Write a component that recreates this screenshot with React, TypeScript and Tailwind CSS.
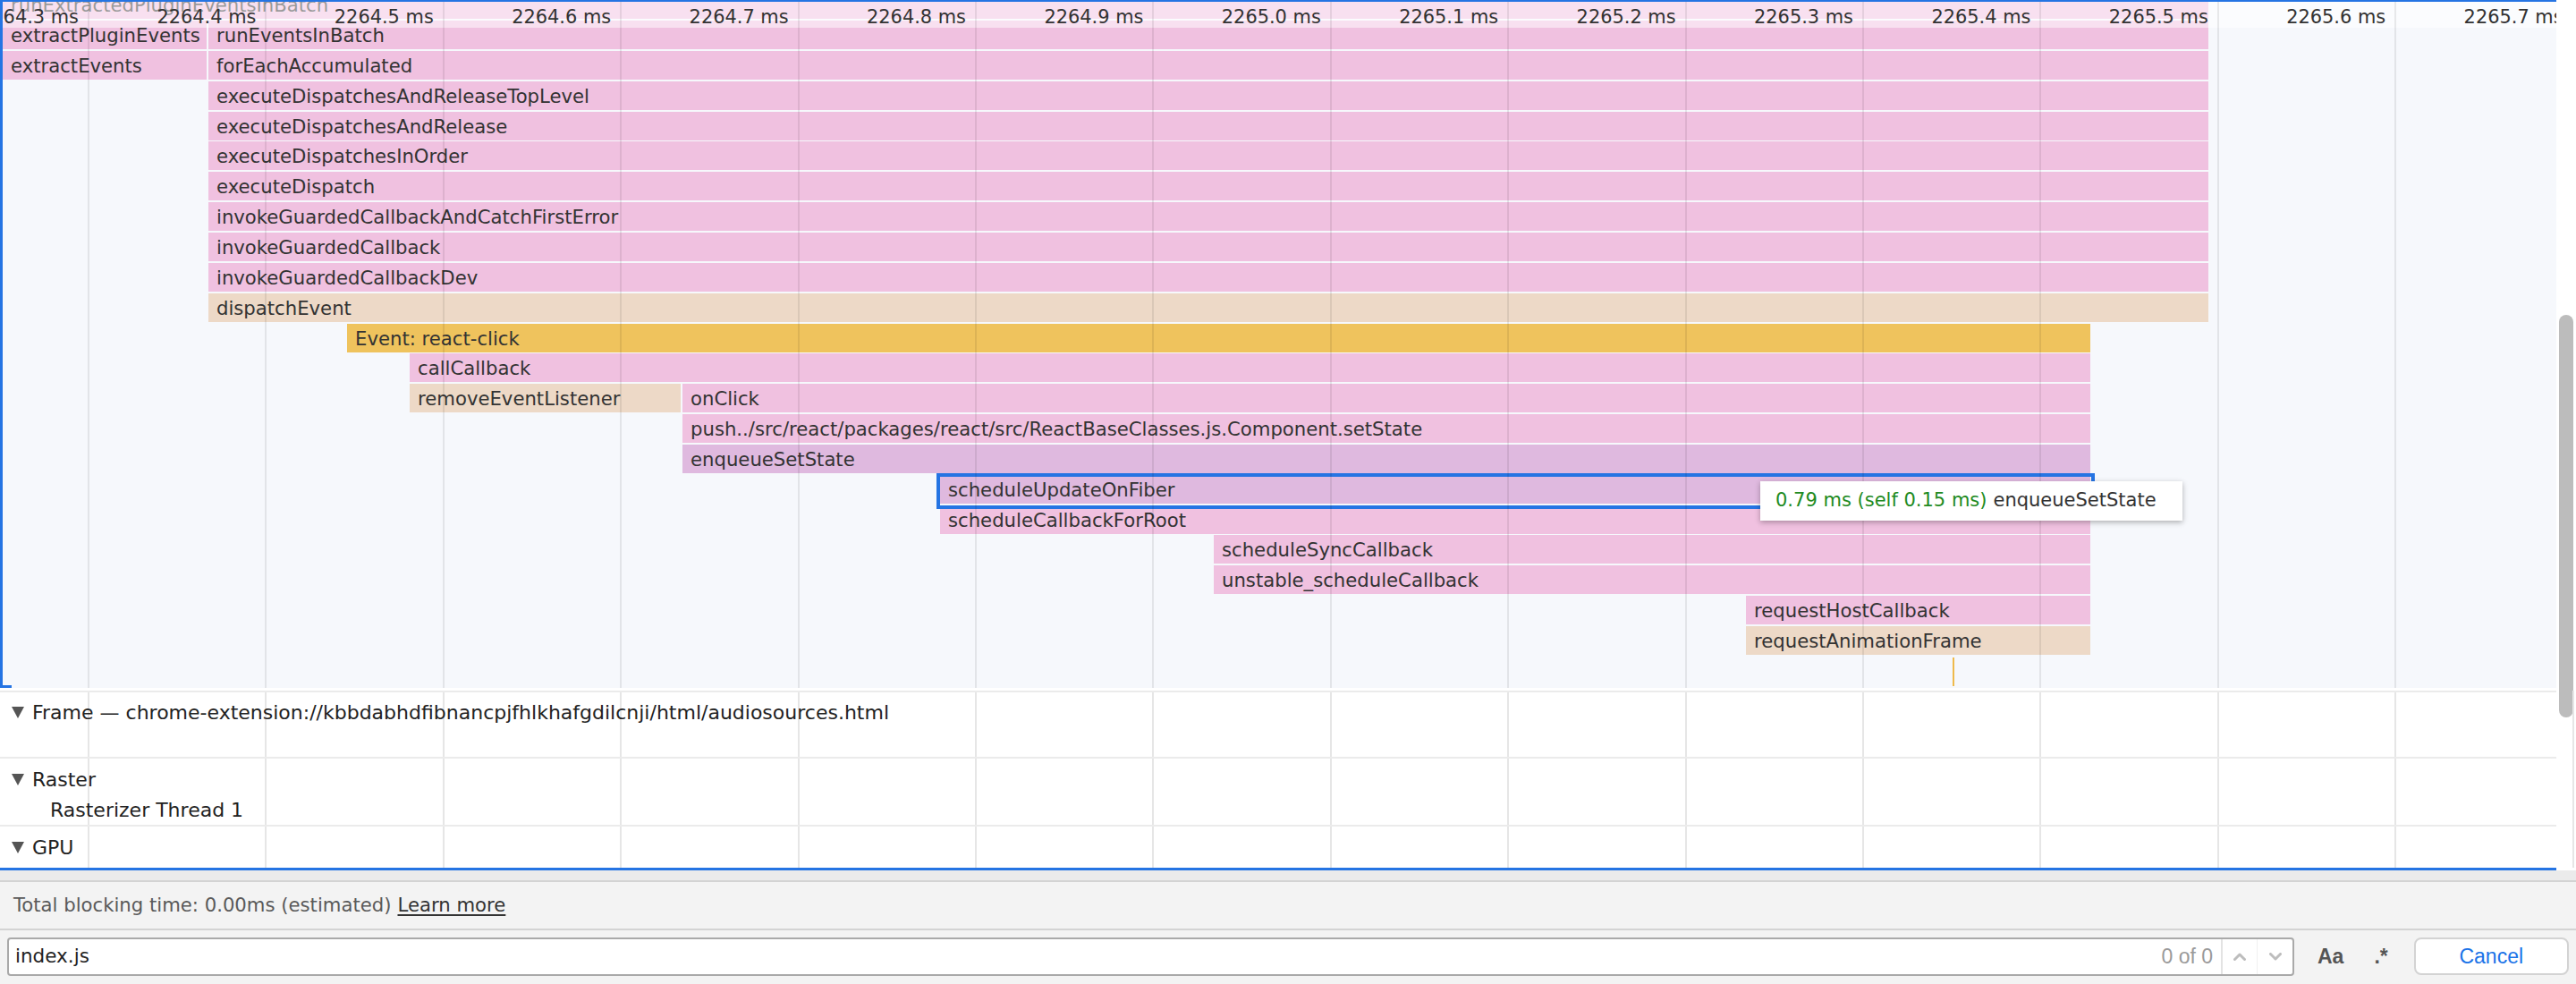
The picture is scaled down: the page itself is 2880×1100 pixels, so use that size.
import React from "react";

const LINE0 = 99;
const STEP = 198.4;
const ROW0 = 23;
const PITCH = 33.85;
const BAR_H = 32;
const BL = 3; // left border
const BT = 2; // top border

const PINK = "bg-[#f0c1e0]";
const TAN = "bg-[#edd9c7]";
const YEL = "bg-[#efc35d]";
const PUR = "bg-[#dfb9df]";

type Bar = { row: number; x1: number; x2: number; label: string; c: string };

const bars: Bar[] = [
  { row: -1, x1: 3, x2: 2469, label: "runExtractedPluginEventsInBatch", c: PINK },
  { row: 0, x1: 3, x2: 231, label: "extractPluginEvents", c: PINK },
  { row: 0, x1: 233, x2: 2469, label: "runEventsInBatch", c: PINK },
  { row: 1, x1: 3, x2: 231, label: "extractEvents", c: PINK },
  { row: 1, x1: 233, x2: 2469, label: "forEachAccumulated", c: PINK },
  { row: 2, x1: 233, x2: 2469, label: "executeDispatchesAndReleaseTopLevel", c: PINK },
  { row: 3, x1: 233, x2: 2469, label: "executeDispatchesAndRelease", c: PINK },
  { row: 4, x1: 233, x2: 2469, label: "executeDispatchesInOrder", c: PINK },
  { row: 5, x1: 233, x2: 2469, label: "executeDispatch", c: PINK },
  { row: 6, x1: 233, x2: 2469, label: "invokeGuardedCallbackAndCatchFirstError", c: PINK },
  { row: 7, x1: 233, x2: 2469, label: "invokeGuardedCallback", c: PINK },
  { row: 8, x1: 233, x2: 2469, label: "invokeGuardedCallbackDev", c: PINK },
  { row: 9, x1: 233, x2: 2469, label: "dispatchEvent", c: TAN },
  { row: 10, x1: 388, x2: 2337, label: "Event: react-click", c: YEL },
  { row: 11, x1: 458, x2: 2337, label: "callCallback", c: PINK },
  { row: 12, x1: 458, x2: 761, label: "removeEventListener", c: TAN },
  { row: 12, x1: 763, x2: 2337, label: "onClick", c: PINK },
  { row: 13, x1: 763, x2: 2337, label: "push../src/react/packages/react/src/ReactBaseClasses.js.Component.setState", c: PINK },
  { row: 14, x1: 763, x2: 2337, label: "enqueueSetState", c: PUR },
  { row: 15, x1: 1051, x2: 2337, label: "scheduleUpdateOnFiber", c: PUR },
  { row: 16, x1: 1051, x2: 2337, label: "scheduleCallbackForRoot", c: PINK },
  { row: 17, x1: 1357, x2: 2337, label: "scheduleSyncCallback", c: PINK },
  { row: 18, x1: 1357, x2: 2337, label: "unstable_scheduleCallback", c: PINK },
  { row: 19, x1: 1952, x2: 2337, label: "requestHostCallback", c: PINK },
  { row: 20, x1: 1952, x2: 2337, label: "requestAnimationFrame", c: TAN },
];

const lines = Array.from({ length: 15 }, (_, k) => LINE0 + STEP * k);
const labels = lines.map((x, k) => ({ x, text: `${(2264.3 + 0.1 * k).toFixed(1)} ms` }));

const FONT = "font-['DejaVu_Sans',sans-serif]";

function FlameChart() {
  return (
    <div className="relative h-[769px] overflow-hidden border-l-[3px] border-t-[2px] border-[#2574e3] bg-[#f6f8fc]">
      {bars.map((b, i) => (
        <div
          key={i}
          className={`absolute overflow-hidden whitespace-nowrap pl-[9px] text-[21.2px] leading-[34px] text-[#333333] ${b.c}`}
          style={{ left: b.x1 - BL, width: b.x2 - b.x1, top: ROW0 + PITCH * b.row - BT, height: BAR_H }}
        >
          {b.label}
        </div>
      ))}
      {/* selection outline */}
      <div
        className="absolute border-[4px] border-[#2574e3]"
        style={{ left: 1047 - BL, top: 529 - BT, width: 2342 - 1047, height: 40 }}
      />
      {/* small tick */}
      <div className="absolute w-[2px] bg-[#efba4c]" style={{ left: 2183 - BL, top: 735 - BT, height: 32 }} />
      {/* ruler overlay */}
      <div className="absolute left-0 right-0 top-0 h-[29px] bg-white/50" />
      {lines.map((x, k) => (
        <div key={k} className="absolute top-0 bottom-0 w-[2px] bg-black/[0.08]" style={{ left: x - BL - 1 }} />
      ))}
      {labels.map((l, k) => (
        <div
          key={k}
          className="absolute w-[200px] whitespace-nowrap text-right text-[20.9px] leading-[32px] text-[#333333]"
          style={{ left: l.x - 11 - 200 - BL, top: 1 }}
        >
          {l.text}
        </div>
      ))}
      {/* tooltip */}
      <div
        className="absolute flex h-[44px] items-center whitespace-nowrap bg-white pl-[17px] text-[21px] shadow-[0_2px_6px_rgba(0,0,0,0.3)]"
        style={{ left: 1968 - BL, top: 538 - BT, width: 472 }}
      >
        <span className="text-[#228b22]">0.79 ms (self 0.15 ms)</span>
        <span className="ml-[7px] text-[#333333]">enqueueSetState</span>
      </div>
      {/* bottom hook of focus border */}
      <div className="absolute bottom-0 left-0 h-[3px] w-[10px] bg-[#2574e3]" />
    </div>
  );
}

function Triangle() {
  return (
    <svg width="14" height="13" viewBox="0 0 14 13" className="shrink-0">
      <polygon points="0,0 14,0 7,13" fill="#555555" />
    </svg>
  );
}

function Tracks() {
  return (
    <div className="relative h-[204px] bg-white text-[22px] text-[#222222]">
      {lines.map((x, k) => (
        <div key={k} className="absolute top-[3px] bottom-[3px] w-[2px] bg-[#e6e6e6]" style={{ left: x - 1 }} />
      ))}
      <div className="relative flex flex-col">
        <div className="h-[3px]" />
        <div className="h-[2px] bg-[#ebebeb]" />
        <div className="h-[72px] pt-[3px]">
          <div className="flex h-[38px] items-center pl-[13px]">
            <Triangle />
            <span className="ml-[9px] whitespace-nowrap">
              Frame — chrome-extension://kbbdabhdfibnancpjfhlkhafgdilcnji/html/audiosources.html
            </span>
          </div>
        </div>
        <div className="h-[2px] bg-[#ebebeb]" />
        <div className="h-[74px] pt-[6px]">
          <div className="flex h-[34px] items-center pl-[13px]">
            <Triangle />
            <span className="ml-[9px]">Raster</span>
          </div>
          <div className="flex h-[34px] items-center pl-[56px]">Rasterizer Thread 1</div>
        </div>
        <div className="h-[2px] bg-[#ebebeb]" />
        <div className="h-[46px] pt-[3px]">
          <div className="flex h-[40px] items-center pl-[13px]">
            <Triangle />
            <span className="ml-[9px]">GPU</span>
          </div>
        </div>
        <div className="h-[3px] bg-[#2574e3]" />
      </div>
    </div>
  );
}

function Chevron({ up }: { up?: boolean }) {
  return (
    <svg width="14" height="9" viewBox="0 0 14 9">
      <polyline
        points={up ? "1.5,7.5 7,2 12.5,7.5" : "1.5,1.5 7,7 12.5,1.5"}
        fill="none"
        stroke="#bdbdbd"
        strokeWidth="3"
        strokeLinecap="round"
        strokeLinejoin="round"
      />
    </svg>
  );
}

export default function App() {
  return (
    <div className={`flex h-[1100px] w-[2880px] flex-col overflow-hidden bg-white ${FONT}`}>
      <div className="flex h-[973px]">
        <div className="flex w-[2858px] flex-col">
          <FlameChart />
          <Tracks />
        </div>
        <div className="w-[22px] bg-white pt-[352px]">
          <div className="ml-[3px] h-[450px] w-[16px] rounded-full bg-[#bcbcbc]" />
        </div>
      </div>
      <div className="flex flex-1 flex-col bg-[#f3f3f3]">
        <div className="h-[11px] bg-[#ebebeb]" />
        <div className="h-[2px] bg-[#d3d3d3]" />
        <div className="flex h-[52px] items-center whitespace-nowrap pl-[15px] text-[21.2px] text-[#5a5a5a]">
          <span>Total blocking time: 0.00ms (estimated)</span>
          <span className="ml-[7px] text-[#333333] underline decoration-[2px] underline-offset-[3px]">Learn more</span>
        </div>
        <div className="h-[2px] bg-[#d3d3d3]" />
        <div className="flex items-start pl-[8px] pt-[8px]">
          <div className="flex h-[43px] w-[2557px] items-stretch rounded-[4px] border-[2px] border-[#a9a9a9] bg-white">
            <div className="flex flex-1 items-center pl-[7px] text-[21.5px] text-[#222222]">index.js</div>
            <div className="flex items-center pr-[9px] font-['Liberation_Sans',sans-serif] text-[23px] text-[#9a9a9a]">0 of 0</div>
            <div className="flex w-[40px] items-center justify-center border-l-[2px] border-[#e3e3e3]">
              <Chevron up />
            </div>
            <div className="flex w-[40px] items-center justify-center border-l-[1px] border-[#f0f0f0]">
              <Chevron />
            </div>
          </div>
          <div className="ml-[26px] flex h-[43px] items-center font-['Liberation_Sans',sans-serif] text-[23px] font-bold text-[#555555]">
            Aa
          </div>
          <div className="ml-[34px] flex h-[43px] items-center font-['Liberation_Sans',sans-serif] text-[23px] font-bold text-[#555555]">
            .*
          </div>
          <div className="ml-[29px] flex h-[42px] w-[173px] items-center justify-center rounded-[8px] border-[2px] border-[#d3d3d3] bg-white font-['Liberation_Sans',sans-serif] text-[23px] text-[#1a73e8]">
            Cancel
          </div>
        </div>
      </div>
    </div>
  );
}
